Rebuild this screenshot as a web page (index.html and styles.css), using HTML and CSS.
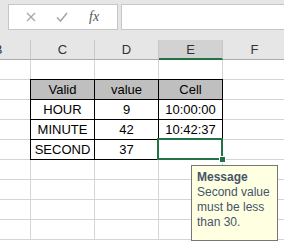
FILE: index.html
```html
<!DOCTYPE html>
<html lang="en">
<head>
  <meta charset="UTF-8">
  <title>Data validation</title>
  <link rel="stylesheet" href="styles.css">
</head>
<body>
  <div class="formula-bar">
    <div class="fx-box">
      <svg class="icon" width="12" height="12" viewBox="0 0 12 12"><path d="M2 2 L10 10 M10 2 L2 10" stroke="#a6a6a6" stroke-width="1.3" fill="none"/></svg>
      <svg class="icon" width="14" height="12" viewBox="0 0 14 12"><path d="M2 6.5 L5.5 10 L12 2" stroke="#a6a6a6" stroke-width="1.6" fill="none"/></svg>
      <span class="fx">fx</span>
    </div>
    <div class="formula-input"></div>
  </div>

  <div class="sheet">
    <div class="row head">
      <div class="cell">B</div>
      <div class="cell">C</div>
      <div class="cell">D</div>
      <div class="cell active">E</div>
      <div class="cell">F</div>
    </div>
    <div class="row">
      <div class="cell"></div><div class="cell"></div><div class="cell"></div><div class="cell"></div><div class="cell"></div>
    </div>
    <div class="row">
      <div class="cell"></div>
      <div class="cell t th tl tt">Valid</div>
      <div class="cell t th tt">value</div>
      <div class="cell t th tt">Cell</div>
      <div class="cell"></div>
    </div>
    <div class="row">
      <div class="cell"></div>
      <div class="cell t tl">HOUR</div>
      <div class="cell t">9</div>
      <div class="cell t">10:00:00</div>
      <div class="cell"></div>
    </div>
    <div class="row">
      <div class="cell"></div>
      <div class="cell t tl">MINUTE</div>
      <div class="cell t">42</div>
      <div class="cell t">10:42:37</div>
      <div class="cell"></div>
    </div>
    <div class="row">
      <div class="cell"></div>
      <div class="cell t tl">SECOND</div>
      <div class="cell t">37</div>
      <div class="cell t"></div>
      <div class="cell"></div>
    </div>
    <div class="row">
      <div class="cell"></div><div class="cell"></div><div class="cell"></div><div class="cell"></div><div class="cell"></div>
    </div>
    <div class="row">
      <div class="cell"></div><div class="cell"></div><div class="cell"></div><div class="cell"></div><div class="cell"></div>
    </div>
    <div class="row">
      <div class="cell"></div><div class="cell"></div><div class="cell"></div><div class="cell"></div><div class="cell"></div>
    </div>
    <div class="row">
      <div class="cell"></div><div class="cell"></div><div class="cell"></div><div class="cell"></div><div class="cell"></div>
    </div>

    <div class="selection"></div>
    <div class="handle"></div>

    <div class="tip">
      <div class="tip-title">Message</div>
      <div>Second value<br>must be less<br>than 30.</div>
    </div>
  </div>
</body>
</html>
```

FILE: styles.css
```css
body {
  margin: 0;
  width: 284px;
  height: 246px;
  overflow: hidden;
  background: #fff;
  font-family: "Liberation Sans", Arial, sans-serif;
}

.formula-bar {
  height: 40px;
  background: #e6e6e6;
  display: flex;
  padding: 4px 0 0 8px;
  box-sizing: border-box;
  gap: 3px;
}

.fx-box {
  width: 110px;
  height: 26px;
  box-sizing: border-box;
  background: #fff;
  border: 1px solid #c6c6c6;
  display: flex;
  align-items: center;
  padding-left: 16px;
  gap: 18px;
}

.icon {
  display: block;
}

.fx {
  font-family: "Liberation Serif", "Times New Roman", serif;
  font-style: italic;
  font-size: 14px;
  color: #555;
  margin-left: 2px;
}

.formula-input {
  flex: 1;
  height: 26px;
  box-sizing: border-box;
  background: #fff;
  border: 1px solid #c6c6c6;
  border-right: none;
}

.sheet {
  position: relative;
}

.row {
  display: grid;
  grid-template-columns: 31px 64px 64px 64px 64px;
  height: 20px;
}

.cell {
  box-sizing: border-box;
  border-right: 1px solid #d4d4d4;
  border-bottom: 1px solid #d4d4d4;
  font-size: 13px;
  line-height: 19px;
  text-align: center;
  color: #000;
  white-space: nowrap;
  overflow: hidden;
}

.head .cell {
  background: #e6e6e6;
  color: #333;
  border-right-color: #c8c8c8;
  border-bottom-color: #ababab;
}

.head .cell:first-child {
  text-indent: -34px;
}

.head .active {
  background: #d2d2d2;
  border-bottom: 2px solid #217346;
}

.t {
  border-right-color: #000;
  border-bottom-color: #000;
}

.tl {
  border-left: 1px solid #000;
  margin-left: -1px;
}

.tt {
  border-top: 1px solid #000;
  margin-top: -1px;
  height: 21px;
  line-height: 19px;
}

.th {
  background: #bfbfbf;
}

.selection {
  position: absolute;
  left: 157px;
  top: 98px;
  width: 66px;
  height: 22px;
  box-sizing: border-box;
  border: 2px solid #217346;
}

.handle {
  position: absolute;
  left: 220px;
  top: 117px;
  width: 5px;
  height: 5px;
  background: #217346;
  border: 1px solid #fff;
  box-sizing: content-box;
  margin: -1px 0 0 -1px;
}

.tip {
  position: absolute;
  left: 191px;
  top: 125px;
  width: 87px;
  height: 76px;
  box-sizing: border-box;
  background: #ffffe1;
  border: 1px solid #767676;
  padding: 4px 0 0 5px;
  font-size: 12px;
  line-height: 15px;
  color: #44546a;
}

.tip-title {
  font-weight: bold;
}
```
